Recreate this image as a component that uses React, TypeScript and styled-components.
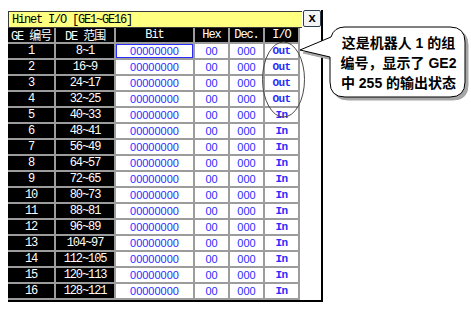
import React from "react";
import styled, { createGlobalStyle } from "styled-components";

const GlobalStyle = createGlobalStyle`
  html, body { margin: 0; padding: 0; background: #ffffff; }
  * { box-sizing: border-box; }
`;

const BLUE = "#2a2aff";
const LINE = "#9c9c9c";

const Page = styled.div`
  position: relative;
  width: 471px;
  height: 309px;
  padding: 10px 0 0 8px;
  overflow: hidden;
  background: #ffffff;
`;

const Window = styled.div`
  width: 315px;
  display: flex;
  flex-direction: column;
  border-right: 2px solid #000000;
  border-bottom: 2px solid #000000;
`;

const TitleRow = styled.div`
  display: flex;
  align-items: flex-start;
  height: 18px;
  gap: 1px;
`;

const TitleBar = styled.div`
  flex: 1;
  height: 17px;
  margin-top: 1px;
  background: #ffff80;
  border: 1px solid #3a3a3a;
  border-right: none;
  display: flex;
  align-items: center;
  padding-left: 3px;
  font-family: "Liberation Mono", "Noto Sans CJK SC", monospace;
  font-size: 12px;
  letter-spacing: -1.2px;
  color: #000000;
`;

const CloseButton = styled.div`
  width: 18px;
  height: 17px;
  background: #f4f4f4;
  border: 1px solid #2c3e50;
  border-radius: 2px;
  display: flex;
  align-items: center;
  justify-content: center;
  font-family: "Liberation Sans", Arial, sans-serif;
  font-weight: bold;
  font-size: 13px;
  line-height: 1;
  color: #000000;
  padding-bottom: 2px;
`;

const Body = styled.div`
  display: flex;
`;

const Grid = styled.div`
  display: grid;
  grid-template-columns: 46px 58px 77px 33px 33px 33px;
  grid-auto-rows: 14px;
  gap: 2px;
  padding-bottom: 2px;
  background: ${LINE};
`;

const HeadCell = styled.div`
  background: #000000;
  color: #ffffff;
  display: flex;
  align-items: center;
  justify-content: center;
  font-family: "Liberation Mono", "Noto Sans CJK SC", monospace;
  font-size: 12px;
  letter-spacing: -1.1px;
  white-space: pre;
`;

const IndexCell = styled(HeadCell)``;

const ValueCell = styled.div<{ $focused?: boolean }>`
  background: #ffffff;
  color: ${BLUE};
  display: flex;
  align-items: center;
  justify-content: center;
  font-family: "Liberation Sans", Arial, sans-serif;
  font-size: 11px;
  border: ${(p) => (p.$focused ? `1px solid ${BLUE}` : "none")};
`;

const IoCell = styled.div`
  background: #ffffff;
  color: ${BLUE};
  display: flex;
  align-items: center;
  justify-content: center;
  font-family: "Liberation Mono", "Courier New", monospace;
  font-weight: bold;
  font-size: 11px;
  letter-spacing: -0.6px;
`;

const Blank = styled.div`
  width: 23px;
  background: #ffffff;
  border-left: 2px solid ${LINE};
`;

const Overlay = styled.svg`
  position: absolute;
  left: 0;
  top: 0;
  width: 471px;
  height: 309px;
  pointer-events: none;
`;

const CalloutText = styled.div`
  position: absolute;
  left: 331px;
  top: 29px;
  width: 135px;
  height: 68px;
  display: flex;
  flex-direction: column;
  align-items: center;
  justify-content: center;
  font-family: "Liberation Sans", "Noto Sans CJK SC", sans-serif;
  font-weight: bold;
  font-size: 14px;
  line-height: 20px;
  color: #000000;
`;

const rows = Array.from({ length: 16 }, (_, i) => {
  const n = i + 1;
  return {
    ge: String(n),
    de: `${8 * n}~${8 * n - 7}`,
    io: n <= 4 ? "Out" : "In",
  };
});

const bubblePath =
  "M 345 27 H 450 Q 465 27 465 42 V 82 Q 465 97 450 97 H 345 Q 330 97 330 82 V 57 L 300 50 L 331 37 Q 334 27 345 27 Z";

export default function App() {
  return (
    <Page>
      <GlobalStyle />
      <Window>
        <TitleRow>
          <TitleBar>Hinet I/O [GE1~GE16]</TitleBar>
          <CloseButton>x</CloseButton>
        </TitleRow>
        <Body>
          <Grid>
            <HeadCell>GE 编号</HeadCell>
            <HeadCell>DE 范围</HeadCell>
            <HeadCell>Bit</HeadCell>
            <HeadCell>Hex</HeadCell>
            <HeadCell>Dec.</HeadCell>
            <HeadCell>I/O</HeadCell>
            {rows.map((r, i) => (
              <React.Fragment key={r.ge}>
                <IndexCell>{r.ge}</IndexCell>
                <IndexCell>{r.de}</IndexCell>
                <ValueCell $focused={i === 0}>00000000</ValueCell>
                <ValueCell>00</ValueCell>
                <ValueCell>000</ValueCell>
                <IoCell>{r.io}</IoCell>
              </React.Fragment>
            ))}
          </Grid>
          <Blank />
        </Body>
      </Window>
      <Overlay viewBox="0 0 471 309">
        <ellipse cx="283.5" cy="79.5" rx="21" ry="37.5" fill="none" stroke="#4a4a4a" strokeWidth="1" />
        <path d={bubblePath} transform="translate(3 3)" fill="#a6a6a6" stroke="#a6a6a6" strokeWidth="1" />
        <path d={bubblePath} fill="#ffffff" stroke="#000000" strokeWidth="1" />
      </Overlay>
      <CalloutText>
        <span>这是机器人 1 的组</span>
        <span>编号，显示了 GE2</span>
        <span>中 255 的输出状态</span>
      </CalloutText>
    </Page>
  );
}
